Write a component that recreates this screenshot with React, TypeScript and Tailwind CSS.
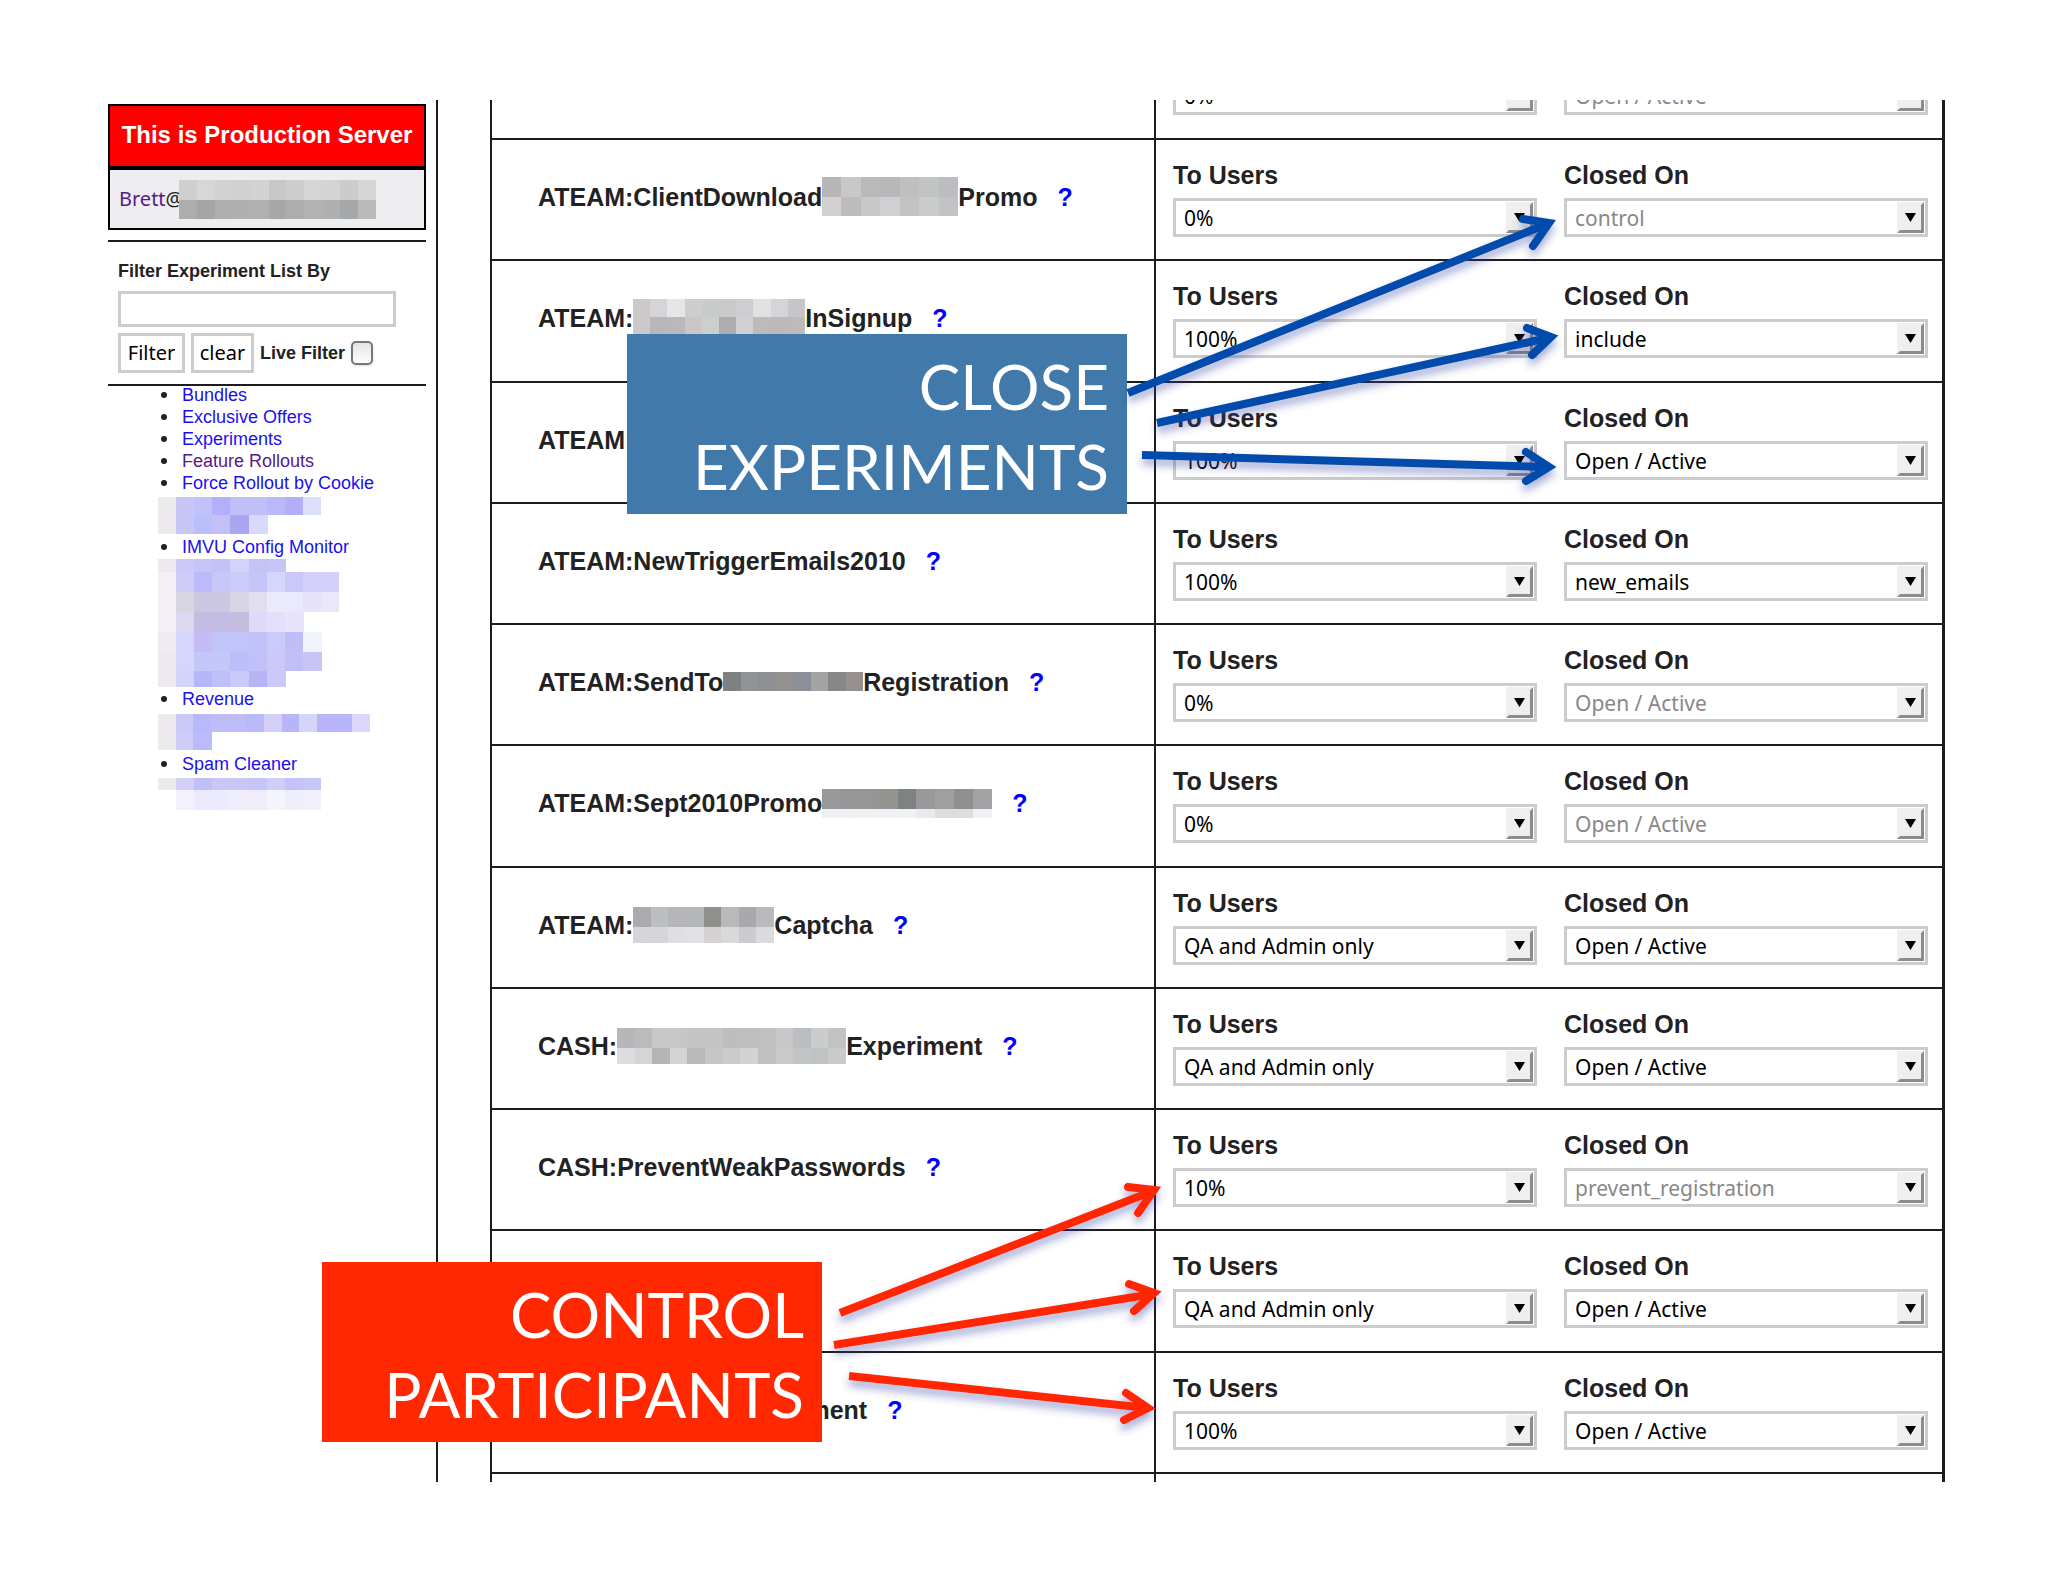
import { Fragment } from "react"

type MosaicRow = { h: number; cells: string[] }

type NamePart = string | { width: number; rows: MosaicRow[] }

type Experiment = {
  id: string
  name: NamePart[]
  users: string
  closedOn: string
  locked?: boolean
}

const experiments: Experiment[] = [
  {
    id: "client-download",
    name: [
      "ATEAM:ClientDownload",
      {
        width: 136,
        rows: [
          { h: 20, cells: ["#b7b5b8", "#c9c7c9", "#b9b9bb", "#b8b8ba", "#bfbfc1", "#c0c4c3", "#bdbcc0"] },
          { h: 19, cells: ["#d2d0d1", "#bdbbbd", "#c8c8c9", "#d0d0d2", "#c3c3c4", "#cbcdcc", "#c3c2c5"] },
        ],
      },
      "Promo",
    ],
    users: "0%",
    closedOn: "control",
    locked: true,
  },
  {
    id: "in-signup",
    name: [
      "ATEAM:",
      {
        width: 172,
        rows: [
          { h: 18, cells: ["#cbc9ca", "#d6d4d7", "#e6e5e8", "#cfcccd", "#c9cbca", "#c8cac9", "#cfcdcf", "#e1e0e3", "#d5d4d8", "#c7c5c8"] },
          { h: 21, cells: ["#cbc9cb", "#b8b8ba", "#b9b9bb", "#cac6c6", "#cdcfce", "#adadaf", "#d0cfd1", "#bcbabb", "#beb8b6", "#bcbabb"] },
        ],
      },
      "InSignup",
    ],
    users: "100%",
    closedOn: "include",
  },
  { id: "ateam", name: ["ATEAM:"], users: "100%", closedOn: "Open / Active" },
  { id: "trigger-emails", name: ["ATEAM:NewTriggerEmails2010"], users: "100%", closedOn: "new_emails" },
  {
    id: "send-to",
    name: [
      "ATEAM:SendTo",
      {
        width: 140,
        rows: [{ h: 19, cells: ["#7f8082", "#919399", "#8e8f92", "#93918f", "#8b8f97", "#a3a3a2", "#858789", "#96908f"] }],
      },
      "Registration",
    ],
    users: "0%",
    closedOn: "Open / Active",
    locked: true,
  },
  {
    id: "sept-promo",
    name: [
      "ATEAM:Sept2010Promo",
      {
        width: 170,
        rows: [
          { h: 20, cells: ["#96989a", "#949698", "#969698", "#959491", "#7e8283", "#99999c", "#a0a0a3", "#92908e", "#a1a3a4"] },
          { h: 9, cells: ["#f1f1f4", "#f0f0f2", "#f1f1f2", "#f1f1f3", "#f1f1f3", "#eaeaec", "#dedddd", "#dedddf", "#f1f1f4"] },
        ],
      },
    ],
    users: "0%",
    closedOn: "Open / Active",
    locked: true,
  },
  {
    id: "captcha",
    name: [
      "ATEAM:",
      {
        width: 141,
        rows: [
          { h: 20, cells: ["#acaaac", "#bbbfc0", "#b6b6b8", "#b5b7b8", "#8f8f8b", "#b7b9bb", "#a9a8ac", "#b8babc"] },
          { h: 16, cells: ["#d5d4d7", "#d6d6d8", "#dfdee1", "#e1e0e3", "#d4d2d3", "#d9d9db", "#cccbce", "#dbdadd"] },
        ],
      },
      "Captcha",
    ],
    users: "QA and Admin only",
    closedOn: "Open / Active",
  },
  {
    id: "cash-experiment",
    name: [
      "CASH:",
      {
        width: 229,
        rows: [
          { h: 20, cells: ["#b8b6b8", "#bcbabc", "#c9c7ca", "#c8c7c8", "#c4c4c5", "#c5c5c7", "#bebdc0", "#bfbec1", "#c0bfc1", "#c7c6c8", "#bbbec0", "#cacccd", "#c2c2c2"] },
          { h: 16, cells: ["#dddce0", "#d5d4d6", "#b5b5b6", "#d4d3d6", "#b9b9b8", "#c5c7c7", "#cbcbcc", "#d3d3d5", "#c0c0c1", "#c9c9ca", "#c1c5c6", "#c0c3c3", "#cbcaca"] },
        ],
      },
      "Experiment",
    ],
    users: "QA and Admin only",
    closedOn: "Open / Active",
  },
  { id: "weak-passwords", name: ["CASH:PreventWeakPasswords"], users: "10%", closedOn: "prevent_registration", locked: true },
  { id: "cash", name: [], users: "QA and Admin only", closedOn: "Open / Active" },
  { id: "last", name: [{ width: 193, rows: [] }, "Experiment"], users: "100%", closedOn: "Open / Active" },
]

const hiddenTools: MosaicRow[] = [
  { h: 18, cells: ["#eceaec", "#c8c6f6", "#c1c2f9", "#b3b0fb", "#c0c0f8", "#c0c0f8", "#b9b8f8", "#b2aff9", "#dbe0fa"] },
  { h: 19, cells: ["#eceaec", "#c6c6f8", "#b8bffa", "#c2c0f4", "#a9a6f2", "#d9dafb"] },
]

const hiddenReports: MosaicRow[] = [
  { h: 13, cells: ["#eceaee", "#cbcaf7", "#c6c5f7", "#c1c2f8", "#d3d3f9", "#c3c3f8", "#c5c5f8"] },
  { h: 20, cells: ["#f2f0f4", "#cfcdf8", "#bdbafa", "#c9c7f9", "#cccaf8", "#c6c5f8", "#d6d5fb", "#c9c8f9", "#d4cff9", "#d4cff9"] },
  { h: 20, cells: ["#f2f0f4", "#d7d5e0", "#cbc7e2", "#ccc8e2", "#d7d5e6", "#e1deef", "#ebe9fc", "#ebe9fc", "#e5e2fa", "#eae7fb"] },
  { h: 20, cells: ["#f2f0f4", "#dad9f0", "#c5bce3", "#c5bce3", "#c4bde0", "#dfdaf9", "#e3dffa", "#e6e3fb"] },
  { h: 20, cells: ["#eeecee", "#d5d6fb", "#c5bcf5", "#c0c5f9", "#c1c4f8", "#c1c3f8", "#cccaf8", "#bfbef9", "#f1f3fb"] },
  { h: 19, cells: ["#eceaec", "#d5d6fb", "#c5c6fa", "#c5c6fa", "#bdbdf9", "#c1c1f9", "#ccc9f8", "#c1bff8", "#c8c4f6"] },
  { h: 16, cells: ["#eceaec", "#d3d3fa", "#b7b6fa", "#bfbff9", "#cac9f9", "#b7b4f4", "#cac9f9"] },
]

const hiddenSales: MosaicRow[] = [
  { h: 18, cells: ["#eceaec", "#cbc9f8", "#b9b8fa", "#bebdfa", "#bebdfa", "#bab9f9", "#d3cff8", "#b8b5f8", "#d5d5fb", "#bab5fa", "#b9b5fa", "#dcd5fc"] },
  { h: 18, cells: ["#eceaec", "#cecdf9", "#bbbafb"] },
]

const hiddenAdmin: MosaicRow[] = [
  { h: 12, cells: ["#eceaec", "#d3d0f5", "#c1bff8", "#c9c7f7", "#cac7f7", "#c7c5f7", "#d0cef7", "#c4c2f9", "#c8c5f9"] },
  { h: 20, cells: ["#ffffff", "#f3f1fd", "#ebe9fc", "#eceafd", "#efedfc", "#efedfc", "#f4f4fd", "#efeefc", "#f1effd"] },
]

const arrows = [
  { color: "#044bac", line: "M1128 393 L1547 224", head: "M1523 219 L1549 223 L1533 246" },
  { color: "#044bac", line: "M1157 423 L1548 338", head: "M1527 328 L1551 337 L1532 355" },
  { color: "#044bac", line: "M1142 455 L1547 467", head: "M1526 452 L1549 467 L1526 481" },
  { color: "#ff2800", line: "M840 1313 L1153 1191", head: "M1128 1187 L1154 1190 L1138 1213" },
  { color: "#ff2800", line: "M834 1345 L1153 1294", head: "M1129 1284 L1154 1293 L1134 1311" },
  { color: "#ff2800", line: "M849 1376 L1147 1408", head: "M1126 1393 L1148 1408 L1124 1420" },
]

function Mosaic({ rows, width }: { rows: MosaicRow[]; width: number }) {
  const height = rows.reduce((sum, row) => sum + row.h, 0)
  const cell = width / Math.max(1, ...rows.map((row) => row.cells.length))
  let top = 0
  return (
    <svg width={width} height={height} className="block shrink-0" shapeRendering="crispEdges" aria-hidden="true">
      {rows.map((row, r) => {
        const y = top
        top += row.h
        return (
          <Fragment key={r}>
            {row.cells.map((fill, c) => (
              <rect key={c} x={c * cell} y={y} width={cell + 1} height={row.h} fill={fill} />
            ))}
          </Fragment>
        )
      })}
    </svg>
  )
}

function Dropdown({ id, label, value, locked }: { id: string; label?: string; value: string; locked?: boolean }) {
  return (
    <div className="relative">
      <select
        id={id}
        aria-label={label}
        defaultValue={value}
        disabled={locked}
        className={`block h-[39px] w-full appearance-none rounded-none border-[3px] border-[#ccc] bg-white pl-2 font-['Noto_Sans',sans-serif] text-[21px] leading-[30px] opacity-100 ${
          locked ? "text-[#888]" : "text-black"
        }`}
      >
        <option>{value}</option>
      </select>
      <svg className="pointer-events-none absolute top-1 right-1 h-[31px] w-[27px]" viewBox="0 0 27 31" aria-hidden="true">
        <path d="M0 0 H27 V31 H0 Z" fill="#efefef" />
        <path d="M27 0 V31 H0 L3 28 H24 V3 Z" fill="#8c8c8c" />
        <path d="M8 11 H19 L13.5 20 Z" fill="#000" />
      </svg>
    </div>
  )
}

function SelectField({ id, label, value, locked }: { id: string; label: string; value: string; locked?: boolean }) {
  return (
    <div className="flex flex-col gap-2">
      <label htmlFor={id} className="text-[25px] leading-[30px] font-bold text-[#222]">
        {label}
      </label>
      <Dropdown id={id} value={value} locked={locked} />
    </div>
  )
}

function ExperimentRow({ item }: { item: Experiment }) {
  return (
    <tr className="h-[121px] [&:nth-child(4n+3)]:h-[122px]">
      <td className="border-r-2 border-b-2 border-[#1c1c20] pb-[6px] pl-[46px] align-middle">
        {item.name.length > 0 && (
          <div className="flex h-10 items-center text-[25px] leading-[30px] font-bold text-[#222]">
            {item.name.map((part, i) =>
              typeof part === "string" ? (
                <span key={i}>{part}</span>
              ) : (
                <Mosaic key={i} rows={part.rows} width={part.width} />
              )
            )}
            <a href="#help" className="ml-5 text-[#00f]">
              ?
            </a>
          </div>
        )}
      </td>
      <td className="border-b-2 border-[#1c1c20] pt-5 pr-[14px] pl-[17px] align-top">
        <div className="grid grid-cols-2 gap-[27px]">
          <SelectField id={`${item.id}-users`} label="To Users" value={item.users} />
          <SelectField id={`${item.id}-closed`} label="Closed On" value={item.closedOn} locked={item.locked} />
        </div>
      </td>
    </tr>
  )
}

function NavLink({ children, visited }: { children: string; visited?: boolean }) {
  return (
    <li className="flex h-[22px] items-center">
      <span className="mr-[15px] ml-[53px] size-[6px] rounded-full bg-[#222]" />
      <a href="#tool" className={visited ? "text-[#551a8b]" : "text-[#1a10ee]"}>
        {children}
      </a>
    </li>
  )
}

function Sidebar() {
  return (
    <aside className="w-[330px] shrink-0 border-r-2 border-[#1c1c20] pt-1 pr-[10px]">
      <div className="border-2 border-black">
        <div className="flex h-16 items-center justify-center border-b-4 border-black bg-[#f00] pb-[2px] text-[24px] leading-[28px] font-bold whitespace-nowrap text-white">
          This is Production Server
        </div>
        <div className="flex h-[58px] items-center bg-[#eeeef0] pl-[9px]">
          <div className="w-[60px] shrink-0 overflow-hidden font-['Noto_Sans',sans-serif] text-[20px] leading-[28px] text-[#222]">
            <a href="#brett" className="text-[#551a8b]">
              Brett
            </a>
            @
          </div>
          <Mosaic
            width={197}
            rows={[
              { h: 20, cells: ["#cfcfcf", "#d7d7d7", "#d2d2d2", "#d1d1d1", "#d3d3d3", "#c8c8c8", "#cdcdcd", "#d5d5d5", "#d4d4d4", "#cccccd", "#d5d5d6"] },
              { h: 19, cells: ["#adadad", "#a5a5a5", "#afafaf", "#b0b0b0", "#b1b1b1", "#a7a7a7", "#adadad", "#b2b2b2", "#b0b0b0", "#a4a8aa", "#bababb"] },
            ]}
          />
        </div>
      </div>

      <form
        className="mt-[10px] border-y-2 border-[#1c1c20] pt-[15px] pb-[11px] pl-[10px] text-[18px] font-bold text-[#222]"
        onSubmit={(e) => e.preventDefault()}
      >
        <label htmlFor="filter" className="block leading-[28px]">
          Filter Experiment List By
        </label>
        <input id="filter" type="text" className="mt-[6px] block h-9 w-[278px] border-[3px] border-[#ccc] bg-white px-2" />
        <div className="mt-[6px] flex items-center gap-[6px]">
          <button type="submit" className="h-10 w-[67px] border-[3px] border-[#ccc] bg-white font-['Noto_Sans',sans-serif] text-[20px] font-normal text-black">
            Filter
          </button>
          <button type="reset" className="h-10 w-[63px] border-[3px] border-[#ccc] bg-white font-['Noto_Sans',sans-serif] text-[20px] font-normal text-black">
            clear
          </button>
          <label htmlFor="live">Live Filter</label>
          <input
            id="live"
            type="checkbox"
            className="h-6 w-[22px] appearance-none rounded-[5px] border-2 border-[#777] bg-linear-to-b from-[#e4e4e4] to-white shadow-sm"
          />
        </div>
      </form>

      <ul className="-mt-[2px] text-[18px] leading-[22px] whitespace-nowrap">
        <NavLink>Bundles</NavLink>
        <NavLink>Exclusive Offers</NavLink>
        <NavLink>Experiments</NavLink>
        <NavLink visited>Feature Rollouts</NavLink>
        <NavLink>Force Rollout by Cookie</NavLink>
        <li className="flex h-[42px] items-center pl-[50px]">
          <Mosaic rows={hiddenTools} width={163} />
        </li>
        <NavLink>IMVU Config Monitor</NavLink>
        <li className="flex h-[130px] items-center pl-[50px]">
          <Mosaic rows={hiddenReports} width={181} />
        </li>
        <NavLink>Revenue</NavLink>
        <li className="flex h-[43px] items-center pl-[50px]">
          <Mosaic rows={hiddenSales} width={212} />
        </li>
        <NavLink>Spam Cleaner</NavLink>
        <li className="flex h-[38px] items-center pl-[50px]">
          <Mosaic rows={hiddenAdmin} width={163} />
        </li>
      </ul>
    </aside>
  )
}

function Arrows() {
  return (
    <svg className="pointer-events-none absolute top-0 left-0 h-[1582px] w-[2048px]" viewBox="0 0 2048 1582" fill="none" aria-hidden="true">
      <defs>
        <filter id="soft" x="0" y="0" width="2048" height="1582" filterUnits="userSpaceOnUse">
          <feDropShadow dx="0" dy="6" stdDeviation="4" floodColor="#3040a0" floodOpacity="0.45" />
        </filter>
      </defs>
      <g filter="url(#soft)" strokeWidth="8">
        {arrows.map((arrow) => (
          <g key={arrow.line} stroke={arrow.color}>
            <path d={arrow.line} />
            <path d={arrow.head} strokeLinecap="round" strokeLinejoin="miter" />
          </g>
        ))}
      </g>
    </svg>
  )
}

export default function App() {
  return (
    <div className="relative bg-white font-['Liberation_Sans',Arial,sans-serif]">
      <div className="flex py-[100px] pr-[103px] pl-[108px]">
        <Sidebar />
        <main className="ml-[52px] min-w-0 flex-1 overflow-hidden">
          <table className="-mt-[24px] w-full table-fixed border-separate border-spacing-0 border-r-[3px] border-l-2 border-[#1c1c20]">
            <colgroup>
              <col className="w-[664px]" />
              <col />
            </colgroup>
            <tbody>
              {/* row scrolled half out of view */}
              <tr className="h-16">
                <td className="border-r-2 border-b-2 border-[#1c1c20]" />
                <td className="border-b-2 border-[#1c1c20] pr-[14px] pl-[17px] align-top">
                  <div className="grid grid-cols-2 gap-[27px]">
                    <Dropdown id="first-users" label="To Users" value="0%" />
                    <Dropdown id="first-closed" label="Closed On" value="Open / Active" locked />
                  </div>
                </td>
              </tr>
              {experiments.map((item) => (
                <ExperimentRow key={item.id} item={item} />
              ))}
              <tr className="h-2">
                <td className="border-r-2 border-[#1c1c20]" />
                <td />
              </tr>
            </tbody>
          </table>
        </main>
      </div>

      <div className="absolute top-[334px] left-[627px] flex h-[180px] w-[500px] flex-col justify-center bg-[#4179aa] pt-1 pr-[18px] text-right font-[Lato,sans-serif] text-[62px] leading-[80px] text-white">
        <p>CLOSE</p>
        <p>EXPERIMENTS</p>
      </div>
      <div className="absolute top-[1262px] left-[322px] flex h-[180px] w-[500px] flex-col justify-center bg-[#ff2800] pt-1 pr-[18px] text-right font-[Lato,sans-serif] text-[62px] leading-[80px] text-white">
        <p>CONTROL</p>
        <p>PARTICIPANTS</p>
      </div>
      <Arrows />
    </div>
  )
}
